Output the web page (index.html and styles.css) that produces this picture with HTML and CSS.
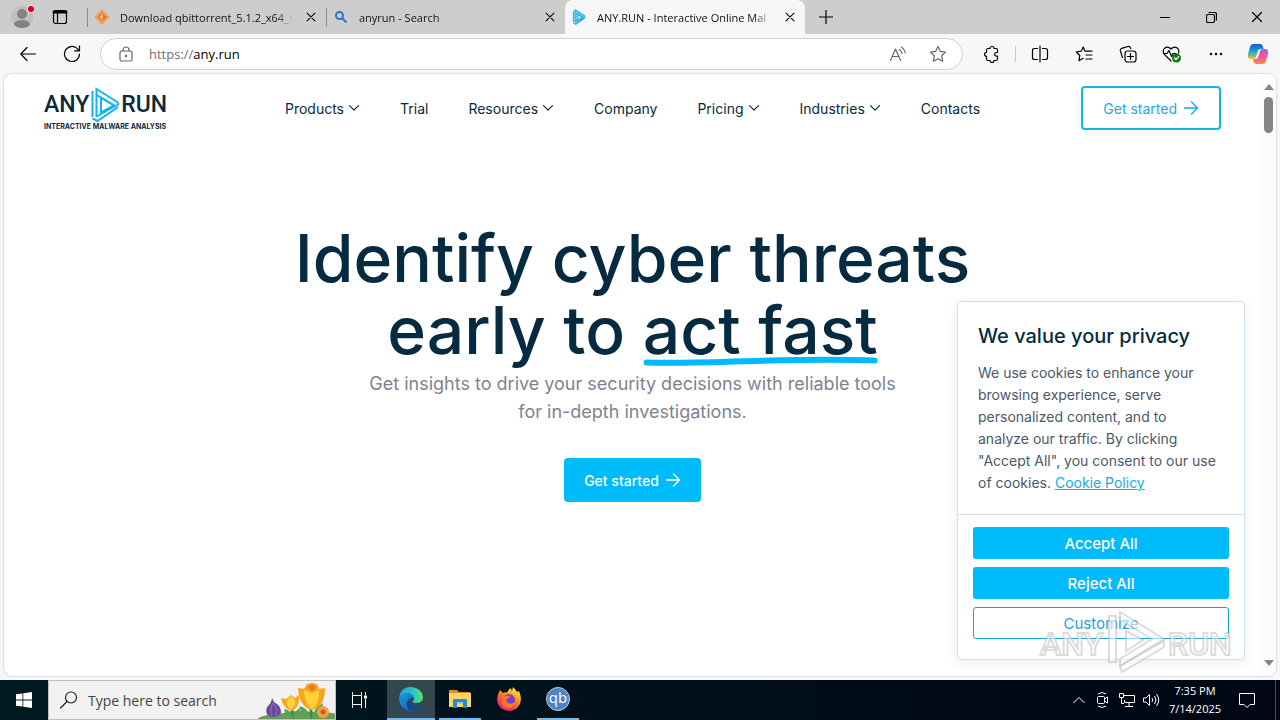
FILE: index.html
```html
<!DOCTYPE html>
<html lang="en">
<head>
    <meta charset="utf-8">
    <title>ANY.RUN - Interactive Online Malware Sandbox</title>
    <link rel="stylesheet" href="styles.css">
</head>
<body>
    <svg class="defs" width="0" height="0" aria-hidden="true">
        <symbol id="close" viewBox="0 0 16 16"><path d="M3.5 3.5l9 9M12.500 3.500l-9 9"/></symbol>
        <symbol id="chevron" viewBox="0 0 12 12"><path d="M1.500 3.700L6 8.200l4.500-4.500"/></symbol>
        <symbol id="arrow" viewBox="0 0 16 16"><path d="M1.500 8h13M8.500 2l6 6-6 6"/></symbol>
        <symbol id="play" viewBox="0 0 30 36">
            <path d="M2.500 4v26M6.500 30V2l21.500 13.500M11 25.500v-15l13 8z"/>
            <path d="M6.500 8L24 18.500M6.500 29.500L28 17.500v-2M28 20L7.500 34l-5-2.500"/>
        </symbol>
    </svg>

    <div class="tab-strip">
        <button class="profile" aria-label="Profile">
            <svg width="24" height="26" viewBox="0 0 24 26">
                <circle cx="12" cy="13" r="11" fill="#c2c0bd"/>
                <circle cx="12" cy="10" r="5" fill="#85817e"/>
                <ellipse cx="12" cy="20" rx="8" ry="4" fill="#85817e"/>
                <circle cx="21" cy="5" r="4" fill="#e5d5d5"/>
                <circle cx="21" cy="5" r="3" fill="#d00020"/>
            </svg>
        </button>
        <button class="workspaces" aria-label="Tab actions">
            <svg class="line" width="16" height="16" viewBox="0 0 16 16"><rect x="1.500" y="1.500" width="13" height="13" rx="2"/><path d="M2 3h12" stroke-width="3"/><path d="M5.500 4v10"/></svg>
        </button>
        <div class="tab">
            <svg width="16" height="16" viewBox="0 0 16 16"><path d="M8 0l8 8-8 8-8-8z" fill="#f0a060"/><path d="M8 3.500l4.500 4.500L8 12.500 3.500 8z" fill="#e07018"/><path d="M8 5v6M5.500 8H9" stroke="#f8c898" stroke-width="1.500"/></svg>
            <span class="tab-title">Download qbittorrent_5.1.2_x64_s</span>
            <button class="tab-close" aria-label="Close tab"><svg class="line" width="14" height="14"><use href="#close"/></svg></button>
        </div>
        <div class="tab">
            <svg width="16" height="16" viewBox="0 0 16 16" fill="none" stroke="#2f76c4" stroke-width="2"><circle cx="6.500" cy="6.500" r="3.500"/><path d="M9 9l4.500 4.500"/></svg>
            <span class="tab-title">anyrun - Search</span>
            <button class="tab-close" aria-label="Close tab"><svg class="line" width="14" height="14"><use href="#close"/></svg></button>
        </div>
        <div class="tab active">
            <svg width="16" height="16" viewBox="0 0 30 36" fill="#a8e4f8" stroke="#2db4e0" stroke-width="3"><use href="#play"/></svg>
            <span class="tab-title">ANY.RUN - Interactive Online Mal</span>
            <button class="tab-close" aria-label="Close tab"><svg class="line" width="14" height="14"><use href="#close"/></svg></button>
        </div>
        <button class="new-tab" aria-label="New tab"><svg class="line" width="14" height="14" viewBox="0 0 14 14"><path d="M7 0v14M0 7h14"/></svg></button>
        <div class="window-controls">
            <button aria-label="Minimize"><svg class="line" width="10" height="10" viewBox="0 0 10 10"><path d="M0 5.500h10"/></svg></button>
            <button aria-label="Restore"><svg class="line" width="11" height="11" viewBox="0 0 11 11"><rect x=".5" y="2.500" width="8" height="8" rx="1.500"/><path d="M3 .5h5.500q2 0 2 2V8"/></svg></button>
            <button aria-label="Close"><svg class="line" width="16" height="16"><use href="#close"/></svg></button>
        </div>
    </div>

    <div class="toolbar">
        <button aria-label="Back"><svg class="line" width="16" height="14" viewBox="0 0 16 14"><path d="M16 7H1M7 .5L.8 7 7 13.500"/></svg></button>
        <button aria-label="Refresh"><svg class="line" width="18" height="18" viewBox="0 0 18 18"><path d="M16.500 9a7.500 7.500 0 1 1-2.500-5.600l2 2M16.500 1v4.800h-4.800"/></svg></button>
        <div class="address">
            <svg class="line muted" width="14" height="16" viewBox="0 0 14 16"><rect x="1" y="5" width="12" height="10" rx="1.500"/><path d="M4 5V4a3 3 0 0 1 6 0v1"/><circle cx="7" cy="10" r=".6" fill="#555"/></svg>
            <label class="url"><span class="scheme">https://</span><input type="text" value="any.run" aria-label="Address"></label>
            <button aria-label="Read aloud"><svg class="line muted" width="18" height="16" viewBox="0 0 18 16"><path d="M1.500 14.500L6.500 3l5 11.500M3.300 10.500h6.500M10.500 3.500q2 1.500 2.500 4M12.500 1q3 2 3.800 6"/></svg></button>
            <button aria-label="Favorite"><svg class="line muted" width="18" height="18" viewBox="0 0 18 18"><path d="M9 1.500l2.300 4.900 5.200.7-3.800 3.700.9 5.400L9 13.700l-4.600 2.500.9-5.400L1.500 7.100l5.200-.7z"/></svg></button>
        </div>
        <button aria-label="Extensions"><svg class="line" width="18" height="18" viewBox="0 0 18 18"><path d="M3.500 5q0-1.500 1.500-1.500h2a2 2 0 0 1 4 0h2q1.500 0 1.500 1.500v2.500h-1a1.800 1.800 0 0 0 0 3.600h1V14q0 1.500-1.500 1.500h-2a2 2 0 0 1-4 0H5q-1.500 0-1.500-1.500v-2.700a2 2 0 0 1 0-4z"/></svg></button>
        <span class="divider"></span>
        <button aria-label="Split screen"><svg class="line" width="18" height="18" viewBox="0 0 18 18"><path d="M9 1v16M6.500 3.500h-3q-2 0-2 2v7q0 2 2 2h3M11.500 3.500h3q2 0 2 2v7q0 2-2 2h-3"/></svg></button>
        <button aria-label="Favorites"><svg class="line" width="18" height="18" viewBox="0 0 18 18"><path d="M10 6.200L8.200 2 6.200 6.200 1.300 7l3.500 3.500L4 15.700l4.200-2.400M10 6.200h7M11 10h6M11 14h6"/></svg></button>
        <button aria-label="Collections"><svg class="line" width="18" height="18" viewBox="0 0 18 18"><rect x="6" y="6" width="11" height="11" rx="2.500"/><path d="M11.500 8.500v6M8.500 11.500h6M3.500 12.500L1.300 5.700Q1 4 2.700 3.300L9 1.500q2-.5 2.800 2"/></svg></button>
        <button aria-label="Browser essentials"><svg class="line" width="20" height="18" viewBox="0 0 20 18"><path d="M9 16L2.500 9.500Q0 6 2.500 3.200 6 .5 9 4q3-3.500 6.500-.8Q17.500 5.500 16.500 8M1.500 8.500H5l2-3 2.500 6 1.500-3h3"/><circle cx="14.500" cy="13" r="4.500" fill="#107c10" stroke="none"/><path d="M12.500 13l1.500 1.500 2.700-2.800" stroke="#fff"/></svg></button>
        <button aria-label="Settings and more"><svg width="14" height="4" viewBox="0 0 14 4"><circle cx="2" cy="2" r="1.200"/><circle cx="7" cy="2" r="1.200"/><circle cx="12" cy="2" r="1.200"/></svg></button>
        <button class="copilot" aria-label="Copilot">
            <svg width="22" height="22" viewBox="0 0 22 22">
                <defs>
                    <linearGradient id="cp1" x2="0" y2="1"><stop offset="0" stop-color="#1b55d8"/><stop offset=".5" stop-color="#16a5d0"/><stop offset="1" stop-color="#f2c02a"/></linearGradient>
                    <linearGradient id="cp2" x2="0" y2="1"><stop offset="0" stop-color="#a45ae8"/><stop offset=".5" stop-color="#ee5a9c"/><stop offset="1" stop-color="#f98a4a"/></linearGradient>
                </defs>
                <path d="M6 1h7q2.500 0 3 3l.5 2h-3q-2 0-2.700 2.300L9 14q-.8 2-3 2H4q-4 0-3-5L3 4q.8-3 3-3z" fill="url(#cp1)"/>
                <path d="M16 21H9.500q-2.500 0-3-3L6 16h2.500q2 0 2.700-2.300L13 8q.7-2 3-2h2q4 0 3 5l-2 7q-.8 3-3 3z" fill="url(#cp2)"/>
            </svg>
        </button>
    </div>

    <div class="page">
        <div class="site">
            <header class="header">
                <a class="logo" href="#" aria-label="ANY.RUN">
                    <span class="logo-row">
                        <span>ANY</span>
                        <svg width="30" height="36" viewBox="0 0 30 36" fill="none" stroke="#14b4f0" stroke-width="2"><use href="#play"/></svg>
                        <span>RUN</span>
                    </span>
                    <span class="logo-sub">INTERACTIVE MALWARE ANALYSIS</span>
                </a>
                <nav class="nav">
                    <a href="#">Products <svg class="line" width="12" height="12"><use href="#chevron"/></svg></a>
                    <a href="#">Trial</a>
                    <a href="#">Resources <svg class="line" width="12" height="12"><use href="#chevron"/></svg></a>
                    <a href="#">Company</a>
                    <a href="#">Pricing <svg class="line" width="12" height="12"><use href="#chevron"/></svg></a>
                    <a href="#">Industries <svg class="line" width="12" height="12"><use href="#chevron"/></svg></a>
                    <a href="#">Contacts</a>
                </nav>
                <a class="btn btn-outline" href="#">Get started <svg class="line" width="16" height="16"><use href="#arrow"/></svg></a>
            </header>

            <main class="hero">
                <h1>Identify cyber threats<br>early to <span class="marked">act fast<svg viewBox="0 0 234 10" preserveAspectRatio="none"><path d="M3.500 6.500C70 8.500 150 1 230.500 4.500"/></svg></span></h1>
                <p>Get insights to drive your security decisions with reliable tools<br>for in-depth investigations.</p>
                <a class="btn btn-fill" href="#">Get started <svg class="line" width="16" height="16"><use href="#arrow"/></svg></a>
            </main>
        </div>

        <div class="scrollbar">
            <svg width="10" height="6" viewBox="0 0 10 6"><path d="M5 0l5 6H0z"/></svg>
            <span class="thumb"></span>
            <svg width="10" height="6" viewBox="0 0 10 6"><path d="M5 6l5-6H0z"/></svg>
        </div>

        <section class="cookies" aria-label="Cookie consent">
            <div class="cookies-text">
                <h2>We value your privacy</h2>
                <p>We use cookies to enhance your<br>browsing experience, serve<br>personalized content, and to<br>analyze our traffic. By clicking<br>"Accept All", you consent to our use<br>of cookies. <a href="#">Cookie Policy</a></p>
            </div>
            <div class="cookies-actions">
                <button>Accept All</button>
                <button>Reject All</button>
                <button class="plain">Customize</button>
            </div>
        </section>

        <svg class="watermark" width="200" height="68" viewBox="0 0 200 68" aria-hidden="true">
            <text x="4" y="49">ANY</text>
            <g transform="translate(70 3)">
                <path d="M3 7h7v46H3zM14 3l44 27-44 27v-7l32-20-32-19zM20 22l17 9-17 11z"/>
                <path d="M14 57l44-25v6L16 63z"/>
            </g>
            <text x="132" y="49">RUN</text>
        </svg>
    </div>

    <div class="taskbar">
        <button class="start" aria-label="Start"><svg width="16" height="16" viewBox="0 0 16 16" fill="#fff"><path d="M0 2.300l6.500-.9v6.200H0zM7.300 1.300L16 0v7.600H7.300zM0 8.400h6.500v6.200L0 13.700zM7.300 8.400H16V16l-8.700-1.300z"/></svg></button>
        <label class="search">
            <svg class="line" width="18" height="18" viewBox="0 0 18 18"><circle cx="11" cy="6.500" r="5.500"/><path d="M7 10.500L.5 17"/></svg>
            <input type="text" placeholder="Type here to search" aria-label="Search">
            <svg class="flowers" width="78" height="38" viewBox="0 0 78 38">
                <path d="M0 38q8-5 18-4 20-6 36-3 16-1 26 2v5z" fill="#6a9c58"/>
                <path d="M15 17q-1 6-5 9-3 9 6 10 9-1 8-6-1-6-7-9z" fill="#6b4a9c"/>
                <path d="M16 22q-4 6-1 13M16 22q5 5 3 12" stroke="#9474c0" fill="none"/>
                <path d="M35 38V25M54 38V24" stroke="#3f8a48" stroke-width="3"/>
                <path d="M36 38q-1-9-9-10 1 7 9 10M37 36q0-6 6-9 1 6-6 9M54 38q-2-11-12-13 2 9 12 13M55 36q2-9 11-14 0 10-11 14" fill="#55a552"/>
                <path d="M24 17l5 1 5-4 4 3 4-3q1 14-8 16-8-3-10-13z" fill="#f8a820"/>
                <path d="M30 19q-1 6 4 10 5-5 4-10l-4-4z" fill="#ffd044"/>
                <path d="M41 7l6 1 3-5 5-1 5 1 2 5 6-1q0 19-13 22-13-3-14-22z" fill="#f6a51c"/>
                <path d="M47 9q0 12 8 20 8-8 7-20l-7 3z" fill="#ffd23c"/><path d="M51 6l4-3 4 3-4 5z" fill="#e87a18"/>
                <circle cx="66" cy="31" r="6" fill="#f4a04a"/><circle cx="66" cy="31" r="2.500" fill="#c85a20"/>
            </svg>
        </label>
        <button class="task-view" aria-label="Task View"><svg width="18" height="18" viewBox="0 0 18 18" fill="none" stroke="#fff"><path d="M1.500 1v3.500h9V1M1.500 17v-3.500h9V17M1.500 5v8M10.500 5v8M14.500 1v3M14.500 8v9"/><path d="M13 6h3" stroke-width="3"/></svg></button>
        <div class="apps">
            <button class="running focused" aria-label="Microsoft Edge">
                <svg width="24" height="24" viewBox="0 0 24 24">
                    <defs><linearGradient id="e1" x2="1" y2="0"><stop offset="0" stop-color="#1ea0e0"/><stop offset=".6" stop-color="#2cc6c4"/><stop offset="1" stop-color="#5fe060"/></linearGradient>
                    <linearGradient id="e2" x2="1" y2="1"><stop offset="0" stop-color="#1a9ae8"/><stop offset="1" stop-color="#0d4f9e"/></linearGradient></defs>
                    <path d="M0 12Q1 0 12 0q11 1 12 10 0 6-7 6-4 0-3-2 2-2 0-5-3-4-8-2-4 1-6 5z" fill="url(#e1)"/>
                    <path d="M0 12Q3 5 9 6q5 1 5 5-3-1-4 2 0 6 6 7 4 0 7-2-4 6-11 6Q1 23 0 12z" fill="url(#e2)"/>
                    <path d="M10 12q-5 4 0 11 8 2 13-5-4 2-8 1-5-2-5-7z" fill="#10488e"/>
                </svg>
            </button>
            <button class="running" aria-label="File Explorer">
                <svg width="22" height="20" viewBox="0 0 22 20"><path d="M0 1h8l2 2h11v5H0z" fill="#dc8d1c"/><path d="M0 4h22v14H0z" fill="#ffd568"/><path d="M4 19v-8q0-1 1-1h12q1 0 1 1v8h-4v-4H8v4z" fill="#2c88d0"/><path d="M8 13h6v2H8z" fill="#8cc8f0"/></svg>
            </button>
            <button aria-label="Firefox">
                <svg width="24" height="24" viewBox="0 0 24 24">
                    <defs><linearGradient id="ff" x1=".8" x2=".2" y2="1"><stop offset="0" stop-color="#fff044"/><stop offset=".4" stop-color="#ff9020"/><stop offset=".75" stop-color="#fb3858"/><stop offset="1" stop-color="#e01890"/></linearGradient></defs>
                    <path d="M3 3l3 3q2-1 4-.5Q11 3 13.500 1l1.500 3 1-4q3 3 4 5l2-1q2 5 2 8.500Q23 23 12 24 1 23 0 13q0-5 3-10z" fill="url(#ff)"/>
                    <circle cx="12" cy="13" r="6" fill="#7442d8"/><path d="M5 11q4-4 9-1l-3 1q-3 1-1 4 4 4 9-1-2 8-9 7-7-2-5-10z" fill="#ff7a24"/>
                </svg>
            </button>
            <button class="running" aria-label="qBittorrent"><span class="qb">qb</span></button>
        </div>
        <div class="tray">
            <button aria-label="Show hidden icons"><svg width="12" height="8" viewBox="0 0 12 8"><path d="M.5 7L6 1.500 11.500 7"/></svg></button>
            <button aria-label="Meet now"><svg width="14" height="18" viewBox="0 0 14 18"><rect x="1.500" y="5.500" width="7" height="7" rx="1"/><path d="M8.500 8l3-2v6l-3-2M2 3q4-3 8 0M2 15q4 3 8 0"/></svg></button>
            <button aria-label="Network"><svg width="16" height="14" viewBox="0 0 16 14"><path d="M5 2.500h10.500v7h-10V7M10 9.500v3.500M6 13.500h8M.5.500h4v4h-4zM2.500 4.500v6H5"/></svg></button>
            <button aria-label="Volume"><svg width="17" height="14" viewBox="0 0 17 14"><path d="M.5 5v4h2.500l3.500 3.500v-11L3 5zM9 5q1.500 2 0 4M11.500 3q3 4 0 8M13.500 1q4.500 6 0 12"/></svg></button>
            <div class="clock"><span>7:35 PM</span><span>7/14/2025</span></div>
            <button class="notices" aria-label="Notifications"><svg width="16" height="16" viewBox="0 0 16 16"><path d="M.5 1.500h15v11H11l-3 3-3-3H.5z"/></svg></button>
        </div>
    </div>
</body>
</html>
```

FILE: styles.css
```css
* {
    box-sizing: border-box;
}
body {
    margin: 0;
    height: 100vh;
    display: flex;
    flex-direction: column;
    overflow: hidden;
    background-color: #f7f7f7;
    color: #001e2e;
    font-family: "Open Sans", sans-serif;
    font-size: 12px;
}
button {
    display: flex;
    align-items: center;
    justify-content: center;
    padding: 0;
    border: none;
    background: none;
    font-family: inherit;
}
input {
    min-width: 0;
    padding: 0;
    border: none;
    outline: none;
    background: none;
    font-family: inherit;
}
svg {
    flex: none;
}
.defs {
    position: absolute;
}
.line {
    fill: none;
    stroke: currentColor;
    stroke-width: 1.2;
    stroke-linecap: round;
    stroke-linejoin: round;
}
.muted {
    color: #666;
}

/* tabs */
.tab-strip {
    height: 34px;
    flex: none;
    display: flex;
    background-color: #cdcdcd;
}
.profile {
    width: 44px;
}
.workspaces {
    width: 32px;
    margin-right: 11px;
}
.tab {
    width: 239px;
    display: flex;
    align-items: center;
    gap: 10px;
    padding: 0 7px 0 6px;
    border-left: 1px solid #888;
    border-image: linear-gradient(transparent 24%, #888 24%, #888 78%, transparent 78%) 1;
}
.tab.active {
    width: 240px;
    border: none;
    border-radius: 8px 8px 0 0;
    background-color: #f7f7f7;
}
.tab-title {
    flex: 1;
    overflow: hidden;
    white-space: nowrap;
    font-size: 11px;
    color: #111;
    mask-image: linear-gradient(90deg, #000 90%, transparent);
}
.tab-close {
    width: 16px;
    height: 16px;
}
.new-tab {
    width: 42px;
}
.window-controls {
    display: flex;
    margin-left: auto;
}
.window-controls button {
    width: 46px;
}

/* toolbar */
.toolbar {
    height: 40px;
    flex: none;
    display: flex;
    align-items: center;
    padding: 0 2px 0 6px;
}
.toolbar button {
    width: 44px;
    height: 32px;
    flex: none;
}
.toolbar .address {
    flex: 1;
    height: 32px;
    display: flex;
    align-items: center;
    margin: 0 7px 0 6px;
    padding: 0 4px 0 18px;
    border: 1px solid #d0d0d0;
    border-radius: 16px;
    background-color: #fff;
}
.toolbar .address button {
    width: 40px;
}
.url {
    flex: 1;
    display: flex;
    align-items: center;
    margin-left: 16px;
    font-size: 13px;
}
.url input {
    flex: 1;
    font-size: 13px;
    color: #000;
}
.scheme {
    color: #707070;
}
.divider {
    width: 1px;
    height: 16px;
    margin: 0 2px 0 1px;
    background-color: #c8c8c8;
}
.toolbar .copilot {
    width: 40px;
}

/* web page */
.page {
    position: relative;
    flex: 1;
    min-height: 0;
    display: flex;
    margin: 0 4px 4px;
    border-radius: 8px;
    background-color: #fff;
    box-shadow: 0 0 2px #aaa;
    font-family: Inter, sans-serif;
}
.site {
    flex: 1;
}
.header {
    height: 68px;
    display: grid;
    grid-template-columns: 1fr auto 1fr;
    align-items: center;
    padding: 0 40px;
}
.header a {
    color: #0a2a3c;
    text-decoration: none;
}
.logo {
    justify-self: start;
    display: flex;
    flex-direction: column;
}
.logo-row {
    display: flex;
    align-items: center;
    gap: 1px;
    height: 36px;
    font-family: Roboto, sans-serif;
    font-size: 23px;
    font-weight: 500;
}
.logo-sub {
    font-size: 7px;
    line-height: 7px;
    font-weight: 700;
}
.nav {
    display: flex;
    gap: 40px;
    font-size: 14px;
}
.nav a {
    display: flex;
    align-items: center;
    gap: 4px;
}
.btn {
    height: 44px;
    display: inline-flex;
    align-items: center;
    gap: 6px;
    padding: 0 20px;
    border-radius: 4px;
    font-size: 14px;
    text-decoration: none;
}
.btn .line {
    stroke-width: 1.5;
}
.header .btn-outline {
    justify-self: end;
    border: 2px solid #14b4e0;
    color: #1eaae4;
}
.btn-fill {
    background-color: #00bbf9;
    color: #fff;
    font-weight: 500;
}
.hero {
    display: flex;
    flex-direction: column;
    align-items: center;
    padding-top: 80px;
    text-align: center;
}
.hero h1 {
    margin: 0 0 4px;
    font-size: 66px;
    line-height: 72px;
    font-weight: 500;
    color: #062b41;
}
.marked {
    position: relative;
}
.marked svg {
    position: absolute;
    left: 0;
    bottom: 4px;
    width: 100%;
    height: 10px;
    fill: none;
    stroke: #00bbf9;
    stroke-width: 6;
    stroke-linecap: round;
}
.hero p {
    margin: 0 0 32px;
    font-size: 18px;
    line-height: 28px;
    color: #80838f;
}
.scrollbar {
    width: 15px;
    display: flex;
    flex-direction: column;
    align-items: center;
    padding: 10px 0;
    border-radius: 0 8px 8px 0;
    background-color: #fcfcfc;
    fill: #858585;
}
.thumb {
    width: 9px;
    height: 36px;
    margin: 7px 0 auto;
    border-radius: 5px;
    background-color: #858585;
}

/* cookie banner */
.cookies {
    position: absolute;
    right: 31px;
    bottom: 16px;
    width: 288px;
    border: 1px solid #cfe2e8;
    border-radius: 4px;
    background-color: #fff;
    box-shadow: 0 4px 12px #00305014;
}
.cookies-text {
    padding: 20px;
    border-bottom: 1px solid #cfe2e8;
}
.cookies h2 {
    margin: 0 0 12px;
    font-size: 20px;
    line-height: 28px;
    font-weight: 500;
    color: #062b41;
}
.cookies p {
    margin: 0;
    font-size: 14px;
    line-height: 22px;
    color: #4c5868;
}
.cookies p a {
    color: #14aee0;
}
.cookies-actions {
    display: flex;
    flex-direction: column;
    gap: 8px;
    padding: 12px 15px 20px;
}
.cookies-actions button {
    height: 32px;
    border-radius: 3px;
    background-color: #00bbf9;
    color: #fff;
    font-size: 15px;
    font-weight: 500;
}
.cookies-actions .plain {
    border: 1px solid #14a8c4;
    background-color: #fff;
    color: #1ea4cc;
    font-weight: 400;
}
.watermark {
    position: absolute;
    right: 40px;
    bottom: 2px;
    fill: #ffffff90;
    stroke: #b0b0b070;
    stroke-width: 2;
    font-family: Roboto, sans-serif;
    font-size: 32px;
    font-weight: 500;
}
.watermark text {
    font-family: "Liberation Sans Narrow", Roboto, sans-serif;
}

/* taskbar */
.taskbar {
    height: 40px;
    flex: none;
    display: flex;
    background: linear-gradient(90deg, #001a22, #000614);
    color: #fff;
}
.start,
.task-view {
    width: 48px;
}
.search {
    width: 288px;
    display: flex;
    align-items: center;
    gap: 10px;
    padding-left: 11px;
    border: 1px solid #c0c0c0;
    background-color: #f2f2f2;
    color: #222;
}
.search input {
    flex: 1;
    font-size: 14px;
}
.search input::placeholder {
    color: #444;
}
.apps {
    display: flex;
    gap: 1px;
    margin-left: 3px;
}
.apps button {
    width: 48px;
    border-bottom: 2px solid transparent;
}
.apps .running {
    border-image: linear-gradient(90deg, transparent 8%, #76b9ed 8%, #76b9ed 92%, transparent 92%) 1;
}
.apps .focused {
    border-image: none;
    border-bottom-color: #76b9ed;
    background-color: #33474f;
}
.qb {
    width: 24px;
    height: 24px;
    border: 1px solid #b8d4f0;
    border-radius: 50%;
    background-color: #4c84c4;
    color: #fff;
    font-size: 15px;
    line-height: 19px;
}
.tray {
    display: flex;
    margin-left: auto;
    margin-right: 4px;
    padding-right: 8px;
    border-right: 1px solid #4a5058;
    fill: none;
    stroke: #fff;
}
.tray button {
    width: 24px;
}
.clock {
    width: 64px;
    display: flex;
    flex-direction: column;
    align-items: center;
    justify-content: center;
    font-size: 11px;
    line-height: 18px;
    stroke: none;
}
.tray .notices {
    width: 40px;
}
```
